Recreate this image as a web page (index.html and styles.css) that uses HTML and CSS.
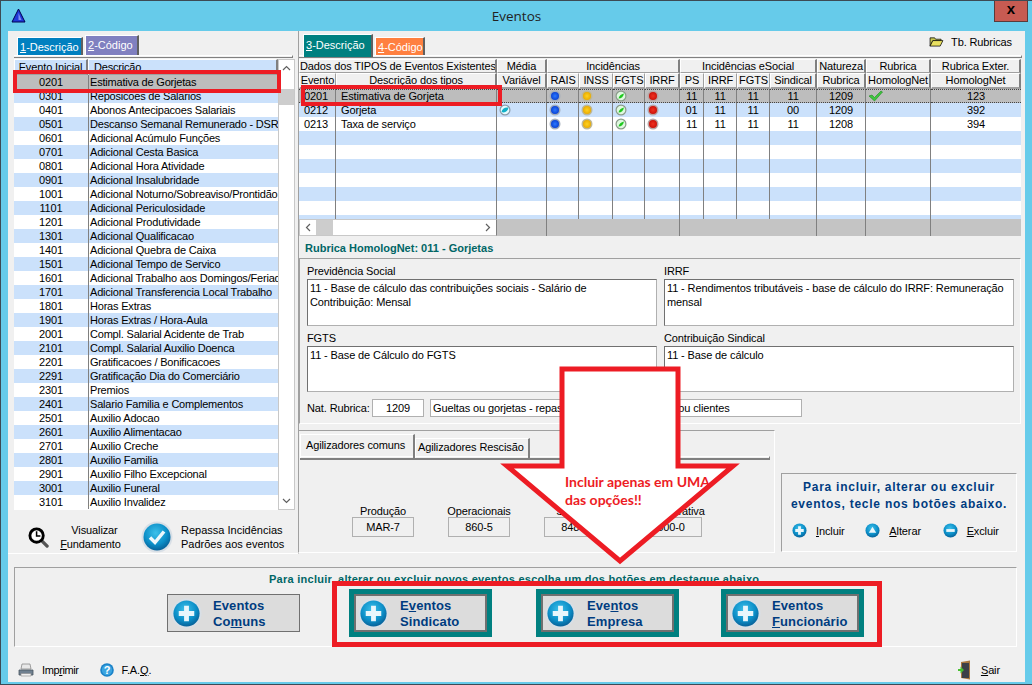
FILE: index.html
```html
<!DOCTYPE html>
<html lang="pt">
<head>
<meta charset="utf-8">
<title>Eventos</title>
<link rel="stylesheet" href="styles.css">
</head>
<body>
<svg class="defs" aria-hidden="true">
  <defs>
    <radialGradient id="gBlue" cx="45%" cy="35%" r="70%"><stop offset="0" stop-color="#3cc0ea"/><stop offset=".6" stop-color="#0c8fc8"/><stop offset="1" stop-color="#06588f"/></radialGradient>
    <radialGradient id="dBlue" cx="50%" cy="50%" r="55%"><stop offset="0" stop-color="#2a78ff"/><stop offset="1" stop-color="#0a3fd0"/></radialGradient>
    <radialGradient id="dYel" cx="50%" cy="50%" r="55%"><stop offset="0" stop-color="#ffd21f"/><stop offset="1" stop-color="#e8a800"/></radialGradient>
    <radialGradient id="dRed" cx="50%" cy="50%" r="55%"><stop offset="0" stop-color="#f03020"/><stop offset="1" stop-color="#c81008"/></radialGradient>
    <symbol id="plus" viewBox="0 0 32 32"><circle cx="16" cy="16" r="15.5" fill="#d8dfe6"/><circle cx="16" cy="16" r="13.5" fill="url(#gBlue)"/><path d="M13.5 8h5v5.5H24v5h-5.500V24h-5v-5.500H8v-5h5.500z" fill="#e8f6fc"/></symbol>
    <symbol id="up" viewBox="0 0 16 16"><circle cx="8" cy="8" r="7.500" fill="url(#gBlue)"/><path d="M8 4l4 6.500H4z" fill="#eaf7fc"/></symbol>
    <symbol id="minus" viewBox="0 0 16 16"><circle cx="8" cy="8" r="7.500" fill="url(#gBlue)"/><path d="M3.500 6.500h9v3h-9z" fill="#eaf7fc"/></symbol>
    <symbol id="plus-s" viewBox="0 0 16 16"><circle cx="8" cy="8" r="7.500" fill="url(#gBlue)"/><path d="M6.500 3.500h3v3h3v3h-3v3h-3v-3h-3v-3h3z" fill="#eaf7fc"/></symbol>
    <symbol id="d-blue" viewBox="0 0 12 12"><circle cx="6" cy="6" r="5.500" fill="#a4aebb"/><circle cx="6" cy="6" r="4" fill="url(#dBlue)"/></symbol>
    <symbol id="d-yel" viewBox="0 0 12 12"><circle cx="6" cy="6" r="5.500" fill="#bcb89a"/><circle cx="6" cy="6" r="4" fill="url(#dYel)"/></symbol>
    <symbol id="d-grn" viewBox="0 0 12 12"><circle cx="6" cy="6" r="5.500" fill="#8a9a8a"/><circle cx="6" cy="6" r="4.300" fill="#dff8df"/><path d="M3.500 8.500C4 6 6 4 9 3.500 8.500 6.500 6.500 8.500 3.500 8.500z" fill="#1ec81e"/></symbol>
    <symbol id="d-red" viewBox="0 0 12 12"><circle cx="6" cy="6" r="5.500" fill="#b8a4a4"/><circle cx="6" cy="6" r="4" fill="url(#dRed)"/></symbol>
    <symbol id="d-cya" viewBox="0 0 12 12"><circle cx="6" cy="6" r="5.500" fill="#8a9aa8"/><circle cx="6" cy="6" r="4.300" fill="#e6fbff"/><path d="M2.500 8C3 5 5.500 3 9.500 3.500 9 7 6 9.500 2.500 8z" fill="#10b0c8"/></symbol>
  </defs>
</svg>

<div class="window">
  <header class="titlebar">
    <svg class="logo" viewBox="0 0 15 15"><path d="M7.500 1L14 14H1z" fill="#2038d8" stroke="#000050" stroke-width="1"/><path d="M7.500 5L10.500 12H7.500z" fill="#8090f0"/></svg>
    <h1 class="title">Eventos</h1>
    <button class="close">x</button>
  </header>

  <div class="client">
    <div class="main">
      <section class="left">
        <div class="tabs tabs-left">
          <div class="tab tab-blue"><u>1</u>-Descrição</div>
          <div class="tab tab-violet up"><u>2</u>-Código</div>
        </div>
        <div class="tabline"></div>
        <div class="listwrap">
          <div class="list">
            <div class="lrow lhead"><span class="hcell c1">Evento Inicial</span><span class="hcell c2">Descrição</span></div>
            <div class="lrow sel"><span class="c1">0201</span><span class="c2">Estimativa de Gorjetas</span></div>
            <div class="lrow"><span class="c1">0301</span><span class="c2">Reposicoes de Salarios</span></div>
            <div class="lrow"><span class="c1">0401</span><span class="c2">Abonos Antecipacoes Salariais</span></div>
            <div class="lrow"><span class="c1">0501</span><span class="c2">Descanso Semanal Remunerado - DSR</span></div>
            <div class="lrow"><span class="c1">0601</span><span class="c2">Adicional Acúmulo Funções</span></div>
            <div class="lrow"><span class="c1">0701</span><span class="c2">Adicional Cesta Basica</span></div>
            <div class="lrow"><span class="c1">0801</span><span class="c2">Adicional Hora Atividade</span></div>
            <div class="lrow"><span class="c1">0901</span><span class="c2">Adicional Insalubridade</span></div>
            <div class="lrow"><span class="c1">1001</span><span class="c2">Adicional Noturno/Sobreaviso/Prontidão</span></div>
            <div class="lrow"><span class="c1">1101</span><span class="c2">Adicional Periculosidade</span></div>
            <div class="lrow"><span class="c1">1201</span><span class="c2">Adicional Produtividade</span></div>
            <div class="lrow"><span class="c1">1301</span><span class="c2">Adicional Qualificacao</span></div>
            <div class="lrow"><span class="c1">1401</span><span class="c2">Adicional Quebra de Caixa</span></div>
            <div class="lrow"><span class="c1">1501</span><span class="c2">Adicional Tempo de Servico</span></div>
            <div class="lrow"><span class="c1">1601</span><span class="c2">Adicional Trabalho aos Domingos/Feriados</span></div>
            <div class="lrow"><span class="c1">1701</span><span class="c2">Adicional Transferencia Local Trabalho</span></div>
            <div class="lrow"><span class="c1">1801</span><span class="c2">Horas Extras</span></div>
            <div class="lrow"><span class="c1">1901</span><span class="c2">Horas Extras / Hora-Aula</span></div>
            <div class="lrow"><span class="c1">2001</span><span class="c2">Compl. Salarial Acidente de Trab</span></div>
            <div class="lrow"><span class="c1">2101</span><span class="c2">Compl. Salarial Auxilio Doenca</span></div>
            <div class="lrow"><span class="c1">2201</span><span class="c2">Gratificacoes / Bonificacoes</span></div>
            <div class="lrow"><span class="c1">2291</span><span class="c2">Gratificação Dia do Comerciário</span></div>
            <div class="lrow"><span class="c1">2301</span><span class="c2">Premios</span></div>
            <div class="lrow"><span class="c1">2401</span><span class="c2">Salario Familia e Complementos</span></div>
            <div class="lrow"><span class="c1">2501</span><span class="c2">Auxilio Adocao</span></div>
            <div class="lrow"><span class="c1">2601</span><span class="c2">Auxilio Alimentacao</span></div>
            <div class="lrow"><span class="c1">2701</span><span class="c2">Auxilio Creche</span></div>
            <div class="lrow"><span class="c1">2801</span><span class="c2">Auxilio Familia</span></div>
            <div class="lrow"><span class="c1">2901</span><span class="c2">Auxilio Filho Excepcional</span></div>
            <div class="lrow"><span class="c1">3001</span><span class="c2">Auxilio Funeral</span></div>
            <div class="lrow"><span class="c1">3101</span><span class="c2">Auxilio Invalidez</span></div>
          </div>
          <div class="vscroll">
            <div class="sbtn"><svg viewBox="0 0 9 6" class="chev"><path d="M1 5l3.500-3.500L8 5" fill="none" stroke="#606060" stroke-width="1.200"/></svg></div>
            <div class="sthumb"></div>
            <div class="strack"></div>
            <div class="sbtn"><svg viewBox="0 0 9 6" class="chev"><path d="M1 1l3.500 3.500L8 1" fill="none" stroke="#606060" stroke-width="1.200"/></svg></div>
          </div>
        </div>
        <div class="leftactions">
          <div class="act-fund">
            <svg class="lens" viewBox="0 0 22 22"><path d="M14 14l6 6" stroke="#555" stroke-width="3.500" stroke-linecap="round"/><circle cx="9" cy="9" r="7" fill="#fff" stroke="#000" stroke-width="3"/><path d="M9 4.500V9.500H13" fill="none" stroke="#000" stroke-width="1.600"/></svg>
            <div class="act-text center"><span class="vz">Visualizar</span><br><u>F</u>undamento</div>
          </div>
          <div class="act-rep">
            <svg class="bigcheck" viewBox="0 0 32 32"><circle cx="16" cy="16" r="15.500" fill="#d8dfe6"/><circle cx="16" cy="16" r="13.500" fill="url(#gBlue)"/><path d="M9 16.500l5 5 9-11" fill="none" stroke="#eef8fc" stroke-width="3.500"/></svg>
            <div class="act-text">Repassa Incidências<br>Padrões aos eventos</div>
          </div>
        </div>
      </section>

      <section class="right">
        <div class="righttop">
          <div class="tabs tabs-right">
            <div class="tab tab-teal up"><u>3</u>-Descrição</div>
            <div class="tab tab-orange"><u>4</u>-Código</div>
          </div>
          <div class="tbrub">
            <svg class="folder" viewBox="0 0 16 12"><path d="M1 2h5l1 1.500h6V5H4L1 11z" fill="#c8c850" stroke="#000" stroke-width=".8"/><path d="M1 11l3-6h11l-3 6z" fill="#e8e060" stroke="#000" stroke-width=".8"/></svg>
            <span>Tb. Rubricas</span>
          </div>
        </div>
        <div class="tabline tabline-right"></div>

        <div class="gridview">
          <table class="grid">
            <colgroup>
              <col class="w37"><col class="w161"><col class="w50"><col class="w32"><col class="w34"><col class="w32"><col class="w35"><col class="w24"><col class="w33"><col class="w33"><col class="w47"><col class="w49"><col class="w65"><col class="w90">
            </colgroup>
            <thead>
              <tr>
                <th colspan="2" class="ge">Dados dos TIPOS de Eventos Existentes</th>
                <th class="ge">Média</th>
                <th colspan="4" class="ge">Incidências</th>
                <th colspan="4" class="ge">Incidências eSocial</th>
                <th class="ge">Natureza</th>
                <th class="ge">Rubrica</th>
                <th class="ge">Rubrica Exter.</th>
              </tr>
              <tr>
                <th>Evento</th><th class="ge">Descrição dos tipos</th>
                <th class="ge">Variável</th>
                <th>RAIS</th><th>INSS</th><th>FGTS</th><th class="ge">IRRF</th>
                <th>PS</th><th>IRRF</th><th>FGTS</th><th class="ge">Sindical</th>
                <th class="ge">Rubrica</th>
                <th class="ge">HomologNet</th>
                <th class="ge">HomologNet</th>
              </tr>
            </thead>
            <tbody>
              <tr class="rsel">
                <td class="tl">0201</td><td class="tl">Estimativa de Gorjeta</td><td></td>
                <td class="ic"><svg class="dot"><use href="#d-blue"/></svg></td><td class="ic"><svg class="dot"><use href="#d-yel"/></svg></td><td class="ic"><svg class="dot"><use href="#d-grn"/></svg></td><td class="ic"><svg class="dot"><use href="#d-red"/></svg></td>
                <td>11</td><td>11</td><td>11</td><td>11</td><td>1209</td>
                <td class="ic"><svg class="tick" viewBox="0 0 15 12"><path d="M1 6l3-1 2.500 2.500L13 1l1.500 1L6.500 11z" fill="#3ec63e" stroke="#1f8a1f" stroke-width=".6"/></svg></td><td>123</td>
              </tr>
              <tr>
                <td class="tl">0212</td><td class="tl">Gorjeta</td><td class="ic"><svg class="dot"><use href="#d-cya"/></svg></td>
                <td class="ic"><svg class="dot"><use href="#d-blue"/></svg></td><td class="ic"><svg class="dot"><use href="#d-yel"/></svg></td><td class="ic"><svg class="dot"><use href="#d-grn"/></svg></td><td class="ic"><svg class="dot"><use href="#d-red"/></svg></td>
                <td>01</td><td>11</td><td>11</td><td>00</td><td>1209</td><td></td><td>392</td>
              </tr>
              <tr>
                <td class="tl">0213</td><td class="tl">Taxa de serviço</td><td></td>
                <td class="ic"><svg class="dot"><use href="#d-blue"/></svg></td><td class="ic"><svg class="dot"><use href="#d-yel"/></svg></td><td class="ic"><svg class="dot"><use href="#d-grn"/></svg></td><td class="ic"><svg class="dot"><use href="#d-red"/></svg></td>
                <td>11</td><td>11</td><td>11</td><td>11</td><td>1208</td><td></td><td>394</td>
              </tr>
              <tr><td></td><td></td><td></td><td></td><td></td><td></td><td></td><td></td><td></td><td></td><td></td><td></td><td></td><td></td></tr>
              <tr><td></td><td></td><td></td><td></td><td></td><td></td><td></td><td></td><td></td><td></td><td></td><td></td><td></td><td></td></tr>
              <tr><td></td><td></td><td></td><td></td><td></td><td></td><td></td><td></td><td></td><td></td><td></td><td></td><td></td><td></td></tr>
              <tr><td></td><td></td><td></td><td></td><td></td><td></td><td></td><td></td><td></td><td></td><td></td><td></td><td></td><td></td></tr>
              <tr><td></td><td></td><td></td><td></td><td></td><td></td><td></td><td></td><td></td><td></td><td></td><td></td><td></td><td></td></tr>
              <tr><td></td><td></td><td></td><td></td><td></td><td></td><td></td><td></td><td></td><td></td><td></td><td></td><td></td><td></td></tr>
              <tr><td></td><td></td><td></td><td></td><td></td><td></td><td></td><td></td><td></td><td></td><td></td><td></td><td></td><td></td></tr>
            </tbody>
          </table>
        </div>
        <div class="gridbar">
          <div class="hscroll">
            <div class="hbtn"><svg viewBox="0 0 6 9" class="chevh"><path d="M5 1L1.500 4.500 5 8" fill="none" stroke="#606060" stroke-width="1.200"/></svg></div>
            <div class="hthumb"></div>
            <div class="htrack"></div>
            <div class="hbtn"><svg viewBox="0 0 6 9" class="chevh"><path d="M1 1l3.500 3.500L1 8" fill="none" stroke="#606060" stroke-width="1.200"/></svg></div>
          </div>
          <div class="barcols"><i class="b50"></i><i class="b133"></i><i class="b137"></i><i class="b49"></i><i class="b65"></i></div>
        </div>

        <div class="homolog">Rubrica HomologNet: 011 - Gorjetas</div>

        <div class="detail">
          <div class="detailgrid">
            <div class="field"><label>Previdência Social</label><div class="memo">11 - Base de cálculo das contribuições sociais - Salário de Contribuição: Mensal</div></div>
            <div class="field"><label>IRRF</label><div class="memo">11 - Rendimentos tributáveis - base de cálculo do IRRF: Remuneração mensal</div></div>
            <div class="field"><label>FGTS</label><div class="memo">11 - Base de Cálculo do FGTS</div></div>
            <div class="field"><label>Contribuição Sindical</label><div class="memo">11 - Base de cálculo</div></div>
          </div>
          <div class="natrow">
            <span class="natlabel">Nat. Rubrica:</span>
            <div class="inp inp-code">1209</div>
            <div class="inp inp-desc">Gueltas ou gorjetas - repassadas por fornecedores ou clientes</div>
          </div>
        </div>

        <div class="lowerrow">
          <div class="agil">
            <div class="agiltabs">
              <div class="atab atab-on">Agilizadores comuns</div>
              <div class="atab">Agilizadores Rescisão</div>
            </div>
            <div class="agilline"></div>
            <div class="agilboxes">
              <div class="abox"><span>Produção</span><div class="aval">MAR-7</div></div>
              <div class="abox"><span>Operacionais</span><div class="aval">860-5</div></div>
              <div class="abox"><span>Sindical</span><div class="aval">848-0</div></div>
              <div class="abox"><span>Administrativa</span><div class="aval">800-0</div></div>
            </div>
          </div>
          <div class="info">
            <p class="infotext">Para incluir, alterar ou excluir<br>eventos, tecle nos botões abaixo.</p>
            <div class="infobtns">
              <span class="ibtn"><svg class="i16"><use href="#plus-s"/></svg><span><u>I</u>ncluir</span></span>
              <span class="ibtn"><svg class="i16"><use href="#up"/></svg><span><u>A</u>lterar</span></span>
              <span class="ibtn"><svg class="i16"><use href="#minus"/></svg><span><u>E</u>xcluir</span></span>
            </div>
          </div>
        </div>
      </section>
    </div>

    <section class="newgroup">
      <p class="newtext">Para incluir, alterar ou excluir novos eventos escolha um dos botões em destaque abaixo</p>
      <div class="newbtns">
        <div class="evbtn evplain"><svg class="i32"><use href="#plus"/></svg><span>Eventos<br>Co<u>m</u>uns</span></div>
        <div class="evbtn evhi first"><svg class="i32"><use href="#plus"/></svg><span>E<u>v</u>entos<br>Sindicato</span></div>
        <div class="evbtn evhi"><svg class="i32"><use href="#plus"/></svg><span>Eve<u>n</u>tos<br>Empresa</span></div>
        <div class="evbtn evhi last"><svg class="i32"><use href="#plus"/></svg><span>Eventos<br><u>F</u>uncionário</span></div>
      </div>
    </section>

    <footer class="footer">
      <div class="fitem">
        <svg class="printer" viewBox="0 0 16 14"><path d="M4 1h8l1 5H3z" fill="#e8e8e8" stroke="#8a8a8a" stroke-width=".8"/><path d="M1 7h14v5H1z" fill="#6f8090" stroke="#4a5660" stroke-width=".8"/><path d="M3 10.500h10V13H3z" fill="#f0f0f0" stroke="#8a8a8a" stroke-width=".6"/></svg>
        <span class="imp">Imp<u>r</u>imir</span>
      </div>
      <div class="fitem faq">
        <svg class="qicon" viewBox="0 0 14 14"><circle cx="7" cy="7" r="6.800" fill="#1a82c8"/><circle cx="7" cy="7" r="5.200" fill="#3aa4e0"/><text x="7" y="11" text-anchor="middle" class="qmark">?</text></svg>
        <span>F.A.<u>Q</u>.</span>
      </div>
      <div class="fitem sair">
        <svg class="door" viewBox="0 0 16 20"><path d="M4 2l9-1.500V19.500L4 18z" fill="#a87840"/><path d="M5 3h7v15H5z" fill="#3c4048"/><path d="M1 9h2.500V6.500L7 10l-3.500 3.500V11H1z" fill="#48c030"/></svg>
        <span><u>S</u>air</span>
      </div>
    </footer>
  </div>

  <div class="mark mark-list"></div>
  <div class="mark mark-grid"></div>
  <div class="mark mark-btns"></div>
  <svg class="arrow" viewBox="0 0 250 210">
    <path d="M67 7H183V104H238L125 199 12 104H67z" fill="#fff" stroke="#ed1c24" stroke-width="5" stroke-linejoin="miter"/>
  </svg>
  <div class="arrowtext">Incluir apenas em UMA<br>das opções!!</div>
</div>
</body>
</html>
```
FILE: styles.css
```css
* { box-sizing: border-box; }
html, body { margin: 0; padding: 0; }
body { font: 11px/14px "Liberation Sans", Arial, sans-serif; letter-spacing: -.12px; color: #000; background: #66cbea; overflow: hidden; }
.defs { position: absolute; width: 0; height: 0; }
u { text-decoration: underline; }

.window { position: relative; width: 1032px; height: 685px; background: #66cbea; border: 1px solid #3c4a54; border-width: 1px 0 1px 1px; display: flex; flex-direction: column; overflow: hidden; }
.titlebar { height: 30px; flex: none; display: grid; grid-template-columns: 1fr auto 1fr; align-items: start; }
.logo { width: 15px; height: 15px; margin: 7px 0 0 10px; }
.title { margin: 6px 0 0; font: 400 13.500px/18px "Open Sans", sans-serif; letter-spacing: 0; color: #222; }
.close { justify-self: end; margin-right: 4px; width: 34px; height: 21px; padding: 0 0 4px; background: #c75b52; border: 1px solid #5a3a3a; border-top: 0; font: 700 15px/16px "Liberation Sans", sans-serif; color: #000; }

.client { flex: none; width: 1017px; height: 651px; margin-left: 7px; background: #f0f0f0; display: flex; flex-direction: column; }
.main { flex: none; height: 523px; display: flex; }

/* left */
.left { flex: none; width: 291px; padding: 4px 0 0 6px; border-right: 1px solid #a0a0a0; border-bottom: 1px solid #fff; }
.tabs { display: flex; align-items: flex-end; }
.tabs-left { height: 20px; margin-left: 3px; gap: 2px; }
.tab { height: 18px; padding: 0 2px; color: #fff; font-size: 11px; line-height: 19px; letter-spacing: 0; white-space: nowrap; border-top: 1px solid #fff; border-left: 1px solid #fff; border-right: 2px solid #606060; }
.tab.up { height: 20px; line-height: 18px; }
.tab-blue { width: 66px; background: #0080c0; }
.tab-violet { width: 54px; background: #8080c0; }
.tab-teal { width: 70px; background: #008080; }
.tab-orange { width: 50px; background: #ff8040; }
.tabline { width: 279px; height: 3px; border-top: 1px solid #fff; border-right: 1px solid #808080; border-bottom: 1px solid #808080; margin-bottom: 1px; }
.listwrap { display: flex; width: 281px; height: 451px; }
.list { width: 264px; background: #fff; overflow: hidden; }
.lrow { display: flex; height: 14px; line-height: 14px; white-space: nowrap; }
.lrow:nth-child(odd):not(.sel) { background: #cbe1fb; }
.lrow.lhead { height: 16px; background: #f0f0f0; line-height: 15px; }
.lrow.sel { background: #bdbdbd; }
.c1 { flex: none; width: 74px; text-align: center; }
.c2 { flex: none; width: 190px; padding-left: 1px; border-left: 1px solid #808080; overflow: hidden; letter-spacing: -.2px; }
.lhead .hcell { border: 1px solid; border-color: #fff #808080 #a0a0a0 #fff; }
.lhead .c1 { border-right-width: 2px; }
.lhead .c2 { padding-left: 5px; border-right-width: 2px; }
.vscroll { width: 17px; display: flex; flex-direction: column; background: #fff; border: 1px solid #c8c8c8; }
.sbtn { height: 16px; flex: none; display: flex; align-items: center; justify-content: center; }
.chev { width: 9px; height: 6px; }
.sthumb { height: 16px; margin-top: 13px; background: #cdcdcd; flex: none; }
.strack { flex: 1; }
.leftactions { display: flex; align-items: flex-start; padding-top: 13px; height: 42px; }
.act-fund { display: flex; align-items: center; width: 127px; padding-left: 14px; height: 28px; }
.lens { width: 21px; height: 21px; flex: none; }
.act-text { line-height: 14px; letter-spacing: 0; }
.act-text.center { text-align: center; margin-left: 11px; width: 61px; letter-spacing: -.12px; }
.vz { padding-left: 8px; }
.act-rep { display: flex; align-items: center; gap: 8px; height: 28px; }
.bigcheck { width: 32px; height: 32px; flex: none; }

/* right */
.right { flex: 1; min-width: 0; padding-left: 0; display: flex; flex-direction: column; }
.righttop { height: 26px; flex: none; display: flex; justify-content: space-between; padding-left: 4px; position: relative; z-index: 1; }
.tabs-right { gap: 2px; align-items: flex-end; height: 26px; }
.tab-teal.up { height: 23px; line-height: 20px; }
.tab-orange { height: 18px; line-height: 18px; margin-bottom: 2px; }
.tbrub { display: flex; align-items: center; gap: 7px; padding: 0 13px 5px 0; height: 22px; margin-top: 2px; }
.folder { width: 15px; height: 11px; }
.tabline-right { width: 723px; flex: none; margin: -2px 0 1px; }
.gridview { width: 722px; height: 160px; flex: none; overflow: hidden; background: #fff; }
.grid { width: 722px; table-layout: fixed; border-collapse: separate; border-spacing: 0; }
.w37 { width: 37px; } .w161 { width: 161px; } .w50 { width: 50px; } .w32 { width: 32px; } .w34 { width: 34px; } .w35 { width: 35px; } .w24 { width: 24px; } .w33 { width: 33px; } .w47 { width: 47px; } .w49 { width: 49px; } .w65 { width: 65px; } .w90 { width: 90px; }
.grid th { height: 14px; padding: 0; font-weight: 400; line-height: 12px; background: #f0f0f0; border: 1px solid; border-color: #fff #a0a0a0 #a0a0a0 #fff; white-space: nowrap; overflow: hidden; }
.grid th.ge { border-right: 2px solid #808080; }
.grid thead tr:last-child th { height: 16px; line-height: 13px; border-bottom-width: 2px; }
.grid td { height: 14px; padding: 0; line-height: 14px; text-align: center; border-right: 1px solid #808080; white-space: nowrap; overflow: hidden; }
.grid td:last-child { border-right: 0; }
.grid td.tl { text-align: left; padding-left: 5px; }
.grid td.ic { text-align: left; padding-left: 2px; }
.grid tbody tr:nth-child(even) td { background: #cbe1fb; }
.grid tbody tr.rsel td { background: #bdbdbd; border-top: 1px dotted #444; border-bottom: 1px dotted #444; line-height: 12px; }
.dot { width: 12px; height: 12px; vertical-align: -2px; display: inline-block; }
.tick { width: 15px; height: 12px; vertical-align: -2px; }
.gridbar { width: 722px; height: 17px; flex: none; display: flex; background: #c4c4c4; }
.hscroll { width: 198px; display: flex; background: #fff; border: 1px solid #c8c8c8; border-right-color: #808080; }
.hbtn { width: 16px; display: flex; align-items: center; justify-content: center; }
.chevh { width: 6px; height: 9px; }
.hthumb { width: 17px; background: #cdcdcd; }
.htrack { flex: 1; }
.barcols { display: flex; flex: 1; }
.barcols i { display: block; border-right: 1px solid #808080; }
.b50 { width: 50px; } .b133 { width: 133px; } .b137 { width: 137px; } .b49 { width: 49px; } .b65 { width: 65px; }
.homolog { height: 22px; flex: none; padding: 6px 0 0 6px; font-weight: 700; color: #006666; line-height: 13px; letter-spacing: 0; }
.detail { width: 722px; height: 166px; flex: none; border: 1px solid; border-color: #a0a0a0 #fff #fff #a0a0a0; padding: 6px 6px 0 7px; }
.detailgrid { display: grid; grid-template-columns: 350px 350px; column-gap: 7px; row-gap: 6px; }
.field label { display: block; height: 14px; line-height: 13px; }
.memo { height: 47px; background: #fff; border: 1px solid; border-color: #707070 #b0b0b0 #b0b0b0 #707070; padding: 1px 8px 1px 2px; line-height: 14px; }
.field:nth-child(n+3) .memo { height: 46px; }
.natrow { display: flex; align-items: center; margin-top: 7px; }
.natlabel { width: 65px; flex: none; }
.inp { height: 18px; background: #fff; border: 1px solid #b0b0b0; line-height: 16px; white-space: nowrap; overflow: hidden; }
.inp-code { width: 52px; text-align: center; }
.inp-desc { width: 372px; margin-left: 6px; padding-left: 2px; }
.lowerrow { display: flex; margin-top: 6px; height: 123px; margin-left: -1px; }
.agil { width: 477px; height: 123px; border: 1px solid; border-color: #a0a0a0 #fff #fff #a0a0a0; padding: 3px 0 0 1px; }
.agiltabs { display: flex; align-items: flex-end; height: 24px; }
.atab { width: 115px; height: 20px; line-height: 17px; padding-left: 2px; border-top: 1px solid #fff; border-left: 1px solid #fff; border-right: 2px solid #808080; white-space: nowrap; }
.atab-on { width: 115px; height: 24px; line-height: 20px; padding-left: 5px; }
.agilline { width: 470px; height: 4px; border-top: 1px solid #fff; border-right: 1px solid #808080; border-bottom: 2px solid #808080; margin-top: -2px; }
.agilboxes { display: flex; gap: 34px; margin: 46px 0 0 52px; }
.abox { width: 62px; display: flex; flex-direction: column; align-items: center; white-space: nowrap; }
.abox span { line-height: 11px; }
.aval { width: 62px; height: 20px; line-height: 18px; text-align: center; border: 1px solid #b0b0b0; }
.info { width: 236px; height: 79px; margin: 43px 0 0 6px; border: 1px solid; border-color: #a0a0a0 #fff #fff #a0a0a0; padding: 5px 0 0; }
.infotext { margin: 0; text-align: center; color: #003c80; font-weight: 700; font-size: 12px; line-height: 17px; letter-spacing: .75px; }
.infobtns { display: flex; margin-top: 10px; padding-left: 10px; }
.ibtn { display: flex; align-items: center; gap: 9px; width: 75px; }
.ibtn:nth-child(2) { width: 79px; }
.i16 { width: 15px; height: 15px; flex: none; }

/* bottom */
.newgroup { width: 1003px; height: 80px; margin: 13px 0 0 6px; flex: none; border: 1px solid; border-color: #a0a0a0 #fff #fff #a0a0a0; padding-top: 4px; }
.newtext { margin: 0 0 0 254px; font-weight: 700; color: #006666; line-height: 14px; white-space: nowrap; letter-spacing: .26px; }
.newbtns { display: flex; align-items: center; height: 48px; margin-top: 3px; padding-left: 152px; }
.evbtn { display: flex; align-items: center; gap: 11px; background: #dcdcdc; font: 700 13px/16px "Liberation Sans", sans-serif; letter-spacing: .1px; color: #003c80; padding-left: 3px; }
.evbtn span { padding-top: 2px; }
.evplain { width: 133px; height: 38px; border: 1px solid #707070; }
.evhi { width: 143px; height: 48px; margin-left: 44px; box-shadow: inset 0 0 0 5px #008080, inset 0 0 0 7px #707070; padding-left: 9px; }
.evhi.first { margin-left: 49px; }
.evhi.last { margin-left: 42px; }
.i32 { width: 31px; height: 31px; flex: none; }
.footer { flex: 1; display: flex; align-items: center; padding: 11px 0 0 10px; }
.fitem { display: flex; align-items: center; gap: 8px; }
.imp { letter-spacing: -.4px; }
.printer { width: 16px; height: 14px; }
.faq { margin-left: 21px; gap: 8px; }
.qicon { width: 14px; height: 14px; }
.qmark { font: 700 11px "Liberation Sans", sans-serif; fill: #fff; }
.sair { margin-left: auto; margin-right: 25px; gap: 8px; }
.door { width: 16px; height: 20px; }

/* annotations drawn over the window */
.mark { position: absolute; border: 4px solid #ed1c24; }
.mark-list { left: 12px; top: 69px; width: 268px; height: 23px; }
.mark-grid { left: 300px; top: 84px; width: 201px; height: 21px; }
.mark-btns { left: 331px; top: 580px; width: 550px; height: 66px; border-width: 5px; }
.arrow { position: absolute; left: 494px; top: 361px; width: 250px; height: 210px; }
.arrowtext { position: absolute; left: 564px; top: 472px; font: 700 14px/18px "Lato", sans-serif; letter-spacing: 0; color: #ed1c24; white-space: nowrap; }
```
